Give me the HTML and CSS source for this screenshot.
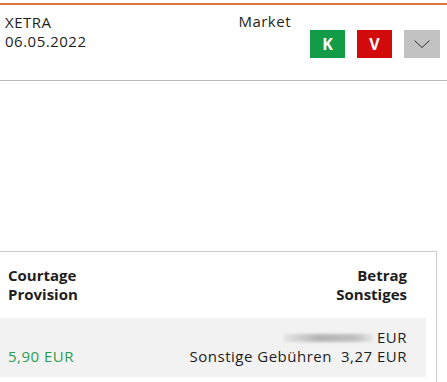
FILE: index.html
```html
<!DOCTYPE html>
<html lang="de">
<head>
  <meta charset="UTF-8">
  <meta name="viewport" content="width=device-width, initial-scale=1.0">
  <title>Order</title>
  <link rel="stylesheet" href="styles.css">
</head>
<body>

  <!-- Order header -->
  <div class="order-head">
    <div class="order-info">
      <span>XETRA</span>
      <span>06.05.2022</span>
    </div>
    <div class="order-type">Market</div>
    <div class="order-actions">
      <button class="btn btn-buy">K</button>
      <button class="btn btn-sell">V</button>
      <button class="btn btn-more">
        <svg viewBox="0 0 16 8" fill="none" stroke="#333" stroke-width="1">
          <path d="M0.5 0.5 L8 7.5 L15.5 0.5"/>
        </svg>
      </button>
    </div>
  </div>

  <!-- Costs table -->
  <div class="costs">
    <div class="costs-head">
      <div class="col-left">
        <span>Courtage</span>
        <span>Provision</span>
      </div>
      <div class="col-right">
        <span>Betrag</span>
        <span>Sonstiges</span>
      </div>
    </div>
    <div class="costs-row">
      <div class="col-left">
        <span class="fee">5,90 EUR</span>
      </div>
      <div class="col-right">
        <span><span class="hidden-amount"></span>EUR</span>
        <span>Sonstige Gebühren<span class="amount">3,27 EUR</span></span>
      </div>
    </div>
  </div>

</body>
</html>
```

FILE: styles.css
```css
* {
  margin: 0;
  padding: 0;
  box-sizing: border-box;
}
body {
  font-family: "Open Sans", Arial, sans-serif;
  font-size: 15px;
  line-height: 19px;
  letter-spacing: 0.5px;
  color: #1e1e1e;
  background-color: #fff;
  padding-top: 3px;
}

/* Order header */
.order-head {
  display: flex;
  align-items: flex-start;
  height: 78px;
  padding: 8px 7px 0 5px;
  border-top: 2px solid #e0763a;
  border-bottom: 1px solid #bcbcbc;
}

.order-info {
  flex: 1;
  display: flex;
  flex-direction: column;
}

.order-type {
  margin-top: -1px;
  margin-right: 19px;
}

.order-actions {
  display: flex;
  gap: 12px;
  margin-top: 17px;
}

.btn {
  width: 35px;
  height: 28px;
  border: none;
  color: #fff;
  font-family: "Open Sans", Arial, sans-serif;
  font-size: 16px;
  font-weight: bold;
  display: flex;
  align-items: center;
  justify-content: center;
}
.btn-buy {
  background-color: #129c48;
}
.btn-sell {
  background-color: #d20a0a;
}
.btn-more {
  width: 36px;
  background-color: #c2c2c2;
}
.btn-more svg {
  width: 16px;
  height: 8px;
}

/* Costs table */
.costs {
  margin-top: 170px;
  width: 437px;
  padding-right: 10px;
  border-top: 1px solid #cccccc;
  border-right: 1px solid #cccccc;
  height: 140px;
}

.costs-head,
.costs-row {
  display: flex;
  justify-content: space-between;
  padding: 14px 19px 0 8px;
}

.costs-head {
  height: 66px;
  font-weight: bold;
  letter-spacing: 0;
}

.costs-row {
  height: 59px;
  padding-top: 10px;
  background-color: #f2f2f2;
}

.col-left,
.col-right {
  display: flex;
  flex-direction: column;
}
.col-left {
  justify-content: flex-end;
  padding-bottom: 11px;
}
.costs-head .col-left {
  justify-content: flex-start;
  padding-bottom: 0;
}
.col-right {
  align-items: flex-end;
}

.fee {
  color: #2a9d52;
}

.hidden-amount {
  display: inline-block;
  width: 90px;
  height: 8px;
  margin-right: 4px;
  vertical-align: 1px;
  background: linear-gradient(90deg, #e6e6e6, #b5b5b5 40%, #c0c0c0 80%, #e8e8e8);
  filter: blur(1.5px);
}

.amount {
  margin-left: 9px;
}
```
